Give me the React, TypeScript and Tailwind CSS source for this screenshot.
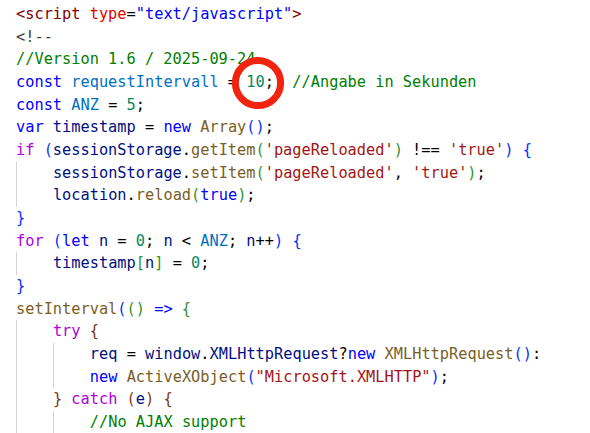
import React from "react";

type Tok = [string, string];

const C: Record<string, string> = {
  tag: "text-[#800000]",
  attr: "text-[#e50000]",
  sb: "text-[#0000ff]",
  p: "text-[#000000]",
  dk: "text-[#3b3b3b]",
  cm: "text-[#008000]",
  kw: "text-[#0000ff]",
  cv: "text-[#0070c1]",
  v: "text-[#001080]",
  n: "text-[#098658]",
  fn: "text-[#795e26]",
  ctl: "text-[#af00db]",
  s: "text-[#a31515]",
  b1: "text-[#0431fa]",
  b2: "text-[#319331]",
  b3: "text-[#7b3814]",
};

type Line = { indent: number; guides: number; toks: Tok[] };

const lines: Line[] = [
  { indent: 0, guides: 0, toks: [["<script", "tag"], [" ", "p"], ["type", "attr"], ["=", "p"], ['"text/javascript"', "sb"], [">", "tag"]] },
  { indent: 0, guides: 0, toks: [["<!--", "dk"]] },
  { indent: 0, guides: 0, toks: [["//Version 1.6 / 2025-09-24", "cm"]] },
  { indent: 0, guides: 0, toks: [["const", "kw"], [" ", "p"], ["requestIntervall", "cv"], [" = ", "p"], ["10", "n"], [";  ", "p"], ["//Angabe in Sekunden", "cm"]] },
  { indent: 0, guides: 0, toks: [["const", "kw"], [" ", "p"], ["ANZ", "cv"], [" = ", "p"], ["5", "n"], [";", "p"]] },
  { indent: 0, guides: 0, toks: [["var", "kw"], [" ", "p"], ["timestamp", "v"], [" = ", "p"], ["new", "kw"], [" ", "p"], ["Array", "fn"], ["()", "b1"], [";", "p"]] },
  { indent: 0, guides: 0, toks: [["if", "ctl"], [" ", "p"], ["(", "b1"], ["sessionStorage", "v"], [".", "p"], ["getItem", "fn"], ["(", "b2"], ["'pageReloaded'", "s"], [")", "b2"], [" !== ", "p"], ["'true'", "s"], [")", "b1"], [" ", "p"], ["{", "b1"]] },
  { indent: 1, guides: 1, toks: [["sessionStorage", "v"], [".", "p"], ["setItem", "fn"], ["(", "b2"], ["'pageReloaded'", "s"], [", ", "p"], ["'true'", "s"], [")", "b2"], [";", "p"]] },
  { indent: 1, guides: 1, toks: [["location", "v"], [".", "p"], ["reload", "fn"], ["(", "b2"], ["true", "kw"], [")", "b2"], [";", "p"]] },
  { indent: 0, guides: 0, toks: [["}", "b1"]] },
  { indent: 0, guides: 0, toks: [["for", "ctl"], [" ", "p"], ["(", "b1"], ["let", "kw"], [" ", "p"], ["n", "v"], [" = ", "p"], ["0", "n"], ["; ", "p"], ["n", "v"], [" < ", "p"], ["ANZ", "cv"], ["; ", "p"], ["n", "v"], ["++", "p"], [")", "b1"], [" ", "p"], ["{", "b1"]] },
  { indent: 1, guides: 1, toks: [["timestamp", "v"], ["[", "b2"], ["n", "v"], ["]", "b2"], [" = ", "p"], ["0", "n"], [";", "p"]] },
  { indent: 0, guides: 0, toks: [["}", "b1"]] },
  { indent: 0, guides: 0, toks: [["setInterval", "fn"], ["(", "b1"], ["()", "b2"], [" ", "p"], ["=>", "kw"], [" ", "p"], ["{", "b2"]] },
  { indent: 1, guides: 1, toks: [["try", "ctl"], [" ", "p"], ["{", "b3"]] },
  { indent: 2, guides: 2, toks: [["req", "v"], [" = ", "p"], ["window", "v"], [".", "p"], ["XMLHttpRequest", "v"], ["?", "p"], ["new", "kw"], [" ", "p"], ["XMLHttpRequest", "fn"], ["()", "b1"], [":", "p"]] },
  { indent: 2, guides: 2, toks: [["new", "kw"], [" ", "p"], ["ActiveXObject", "fn"], ["(", "b1"], ['"Microsoft.XMLHTTP"', "s"], [")", "b1"], [";", "p"]] },
  { indent: 1, guides: 1, toks: [["}", "b3"], [" ", "p"], ["catch", "ctl"], [" ", "p"], ["(", "b3"], ["e", "v"], [")", "b3"], [" ", "p"], ["{", "b3"]] },
  { indent: 2, guides: 2, toks: [["//No AJAX support", "cm"]] },
];

export default function App() {
  return (
    <div className="relative w-[590px] h-[433px] overflow-hidden bg-white">
      <div
        className="pt-[3px] pl-[16px] text-[15.3px] leading-[22.67px] whitespace-pre"
        style={{ fontFamily: '"DejaVu Sans Mono", "Liberation Mono", monospace' }}
      >
        {lines.map((ln, i) => (
          <div key={i} className="flex h-[22.67px] items-stretch">
            {Array.from({ length: ln.indent }).map((_, k) => (
              <span
                key={k}
                className={
                  k < ln.guides
                    ? "inline-block w-[36.9px] shrink-0 border-l border-[#d3d3d3]"
                    : "inline-block w-[36.9px] shrink-0"
                }
              />
            ))}
            <span>
              {ln.toks.map((t, j) => (
                <span key={j} className={C[t[1]]}>
                  {t[0]}
                </span>
              ))}
            </span>
          </div>
        ))}
      </div>
      <svg
        className="absolute left-[228.5px] top-[54px]"
        width="58"
        height="58"
        viewBox="0 0 58 58"
      >
        <circle cx="29" cy="29" r="22.6" fill="none" stroke="#f0240f" strokeWidth="7" />
      </svg>
    </div>
  );
}
